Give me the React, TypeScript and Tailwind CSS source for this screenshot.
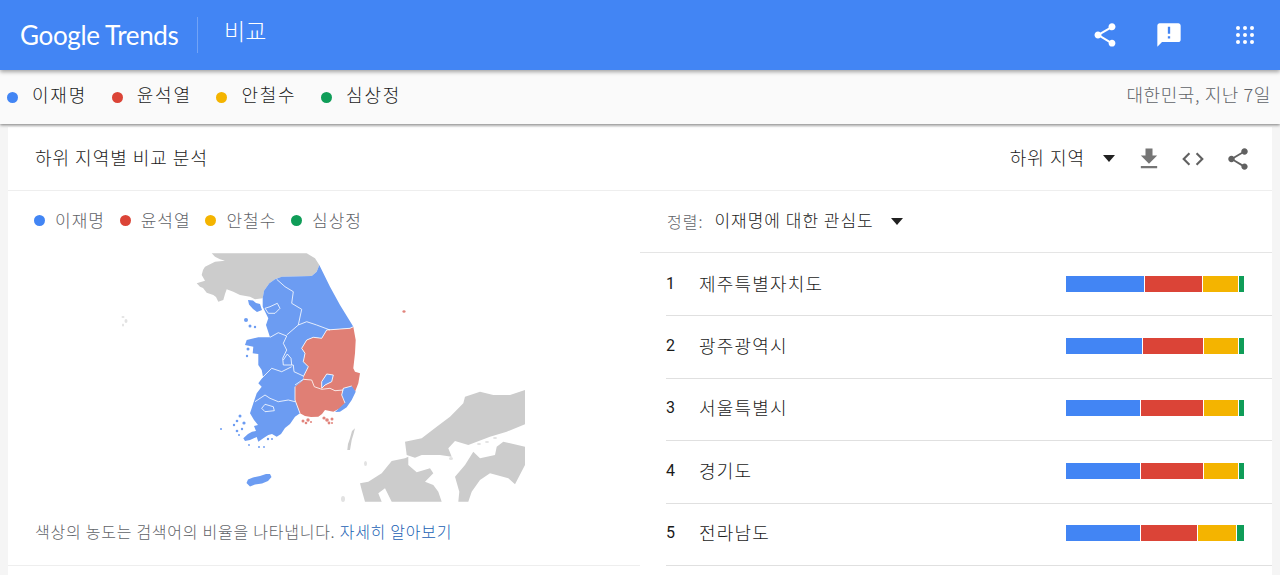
const TERMS = [
  { name: "이재명", dot: "bg-[#4285f4]" },
  { name: "윤석열", dot: "bg-[#db4437]" },
  { name: "안철수", dot: "bg-[#f4b400]" },
  { name: "심상정", dot: "bg-[#0f9d58]" },
];

const ROWS = [
  { rank: 1, name: "제주특별자치도", bars: [78, 58, 35, 5] },
  { rank: 2, name: "광주광역시", bars: [76, 61, 34, 5] },
  { rank: 3, name: "서울특별시", bars: [74, 63, 34, 5] },
  { rank: 4, name: "경기도", bars: [74, 63, 34, 5] },
  { rank: 5, name: "전라남도", bars: [74, 56, 38, 7] },
];

// tiny islands on the map: [x, y, radius]
const BLUE_ISLES = [
  [246, 320, 2], [250, 326, 1.5], [255, 327, 1.2], [248, 349, 1.5], [247, 356, 1.2], [221, 429, 1],
  [234, 425, 1.2], [237, 421, 1.3], [240, 416, 1.5], [244, 423, 1.6], [237, 431, 1.3], [239, 435, 1],
  [242, 429, 1.2], [259, 447, 1], [264, 447, 0.9], [249, 445, 0.9], [268, 439, 1.2], [272, 439, 1],
];
const RED_ISLES = [
  [303, 421, 1.5], [306, 423, 1.3], [308, 420, 1.7], [311, 422, 1], [324, 418, 1.6], [327, 420, 1.8],
  [329, 423, 1.4], [332, 419, 1.5], [332, 423, 1],
];

const SHARE =
  "M18 16.08c-.76 0-1.44.3-1.96.77L8.91 12.7c.05-.23.09-.46.09-.7s-.04-.47-.09-.7l7.05-4.11c.54.5 1.25.81 2.04.81 1.66 0 3-1.34 3-3s-1.34-3-3-3-3 1.34-3 3c0 .24.04.47.09.7L8.04 9.81C7.5 9.31 6.79 9 6 9c-1.66 0-3 1.34-3 3s1.34 3 3 3c.79 0 1.5-.31 2.04-.81l7.12 4.16c-.05.21-.08.43-.08.65 0 1.61 1.31 2.92 2.92 2.92 1.61 0 2.92-1.31 2.92-2.92s-1.31-2.92-2.92-2.92z";

const Icon = ({ d, className }: { d: string; className: string }) => (
  <svg viewBox="0 0 24 24" fill="currentColor" className={className}>
    <path d={d} />
  </svg>
);

const Caret = () => (
  <svg viewBox="0 0 12 7" className="h-[7px] w-3 fill-[#212121]">
    <path d="M0 0h12L6 7z" />
  </svg>
);

const KoreaMap = () => (
  <svg viewBox="115 250 415 255" className="h-[255px] w-[415px]">
    {/* north korea + japan */}
    <g fill="#cccccc">
      <path d="M211.7 253.3H306.7L315 258.3L319.3 265L316.7 271.7L311.7 276L281.7 276.7L275 279.3L269.3 283.3L264 290.7L262.7 298.3L255 299.3L250 296.7L240 295L233.3 291.7L226.7 289.3L225 294L223.3 300L218.3 301.7L216 297L213.3 295L206.7 292.7L203 288L200 286.7L196.7 283.3L205 280.7L201.7 275L203 270L205 266.7L215 261.7L225 260.7L220 259.3L215 256.7Z" />
      <path d="M525 390V424.3L506.7 431.7L490 436.7L468.3 445L455 441L448.3 448.3L451.7 456.7L440 455L421.7 455L415 457.7L406.7 455L405 441.7L421.7 438.3L436.7 426.7L450 416.7L463.3 403.3L465 396.7L480 391.7L493.3 395L510 395Z" />
      <path d="M503.3 441.7L525 446.7V465L515 484.3L508.3 478.3L490 473.3L480 480L471.7 491.7L468.3 501.7H458.3L459.3 491.7L455 476.7L465 465L473.3 451.7L480 458.3L495 455L496.7 446.7Z" />
      <path d="M408.3 456.7L408.3 465L416.7 472.3L430 468.3L433.3 473.3L425 481.7L433.3 485L438.3 491.7L441.7 501.7H391.7L385 488.3L378.3 493.3L381.7 501.7H365L361.7 490L360 483.3L368.3 481.7L381.7 473.3L391.7 461L405 458.3Z" />
      <path d="M355 428.3L353.5 434L351.7 440L350 450L347.3 450L348 444L350 438.3L352 431Z" />
      <g fill="#e2e2e2">
        <ellipse cx="365.5" cy="463.5" rx="1.5" ry="2.5" />
        <ellipse cx="343" cy="499" rx="2" ry="3" />
        <ellipse cx="451" cy="458.5" rx="2" ry="1.5" />
        <ellipse cx="479" cy="444" rx="2" ry="1" />
        <ellipse cx="487" cy="442" rx="2" ry="1" />
        <ellipse cx="495" cy="438" rx="2" ry="1" />
        <ellipse cx="123" cy="317" rx="1.5" ry="1" />
        <ellipse cx="126" cy="321" rx="1.5" ry="2" />
        <ellipse cx="123" cy="325" rx="1" ry="1.5" />
      </g>
    </g>

    {/* red provinces */}
    <path
      d="M353.3 326.7L355.7 340L355 353.3L353.3 368.3L355 371.7L360 373.3L358.3 383.3L355 391.7L351.7 386.7L343.3 388.3L341.7 395L346.7 401.7L340 408.3L333.3 411.7L325 410L322 414L318.3 416.7L311 417L305 416L300 413.3L295 400L295 386.7L303.3 380L303.3 376.7L308.3 366.7L303.3 361.7L305 353.3L301.7 348.3L306.7 340L313.3 337.3L321.7 338.3L326.7 330L350 328.3Z"
      fill="#e07f75"
    />
    <g fill="#d9655b" fillOpacity="0.8">
      {RED_ISLES.map(([cx, cy, r], i) => (
        <circle key={i} cx={cx} cy={cy} r={r} />
      ))}
      <ellipse cx="404" cy="311.5" rx="1.6" ry="1.2" />
    </g>

    {/* blue provinces */}
    <g fill="#6c9cf2">
      <path d="M319.3 265L330 286.7L340 305L352.3 325L353.3 326.7L350 328.3L326.7 330L321.7 338.3L313.3 337.3L306.7 340L301.7 348.3L305 353.3L303.3 361.7L308.3 366.7L303.3 376.7L303.3 380L295 386.7L295 400L300 413.3L295 416.7L290 424L285 428L281 434L276.7 436.7L272 434L268.3 435L263.3 438.3L258.3 441.7L256.7 437L250 440L245 441L243.3 438.3L248 434L252 431.7L256 431L254 426L258 425L254 420L250 413.3L253.3 403.3L256.7 393.3L261.7 386.7L258.3 383.3L263 377L261.7 370L258.3 365L258.3 354L252.7 353.3L253.3 346.7L245 345L246.7 340L258.3 337.3L270 337.3L266 325L268.3 318.3L262.7 306.7L262.7 298.3L264 290.7L269.3 283.3L275 279.3L281.7 276.7L311.7 276L316.7 271.7Z" />
      <path d="M343.3 388.3L351.7 386L355.7 391.7L351.7 400L346.7 407.3L340 411.7L335 412L345 403L341.7 395Z" />
      <path d="M246.5 483L248 479.5L253 477.5L260 476L266 474L270 474L271.5 477L268 481L262 483.5L255 484.5L250 486.5Z" />
      <path d="M248 300l5 .5 3 2.500 4 1 2 6-5 2-4-3-4-4.500z" />
      {BLUE_ISLES.map(([cx, cy, r], i) => (
        <circle key={i} cx={cx} cy={cy} r={r} />
      ))}
    </g>
    <path
      d="M321.7 381.7L326.7 374L333.3 375L331.7 381.7L325 385L321.7 388.3Z"
      fill="#6c9cf2"
      stroke="#fff"
      strokeWidth="0.9"
    />

    {/* region borders */}
    <g fill="none" stroke="#ffffff" strokeWidth="0.9" strokeOpacity="0.9">
      <path d="M276.7 279.3L285 286.7L293.3 291.7L291.7 303.3L301.7 309.3L298.3 325L286.7 335" />
      <path d="M298.3 325L306.7 321.7L316.7 325L330 330" />
      <path d="M270 337.3L278.3 332.7L286.7 336" />
      <path d="M286.7 336L283.3 343.3L286.7 350L282.7 358.3L283.3 365L293.3 365L294 371.7L303.3 376" />
      <path d="M283.3 360L287.3 354L291 358.3L291.7 365" />
      <path d="M261.7 378.3L271.7 368.3L281.7 371.7L291.7 366.7" />
      <path d="M255 401.7L265 395L270 398.3L278.3 401.7L288.3 400L295 401.7" />
      <path d="M261.7 408.3L265 404.3L273.3 406.7L274.3 410.7L265 411.7Z" />
      <path d="M295 385L303.3 379.3L311.7 380L314.3 386.7L321.7 389.3L330 388.3L335 390.7L343.3 390" />
      <path d="M270 306.7L277.3 303.3L280 308.3L275 313.3L268.3 313.3L265 308.3Z" />
      <path d="M345 403L341.7 395L343.3 388.3L351.7 386" />
      <path d="M353.3 326.7L350 328.3L326.7 330L321.7 338.3L313.3 337.3L306.7 340L301.7 348.3L305 353.3L303.3 361.7L308.3 366.7L303.3 376.7" />
      <path d="M295 386.7L295 400L300 413.3" />
    </g>
  </svg>
);

const StackedBar = ({ bars }: { bars: number[] }) => {
  const colors = ["bg-[#4285f4]", "bg-[#db4437]", "bg-[#f4b400]", "bg-[#0f9d58]"];
  return (
    <div className="flex h-4 w-[178px] gap-px">
      {bars.map((w, i) => (
        <div key={i} className={colors[i]} style={{ width: w }} />
      ))}
    </div>
  );
};

export default function App() {
  return (
    <div
      className="h-[575px] w-[1280px] overflow-hidden bg-[#f5f5f5] text-[#1a1a1a]"
      style={{ fontFamily: "'Noto Sans CJK KR', Roboto, sans-serif" }}
    >
      <header className="relative z-20 flex h-[70px] items-center bg-[#4285f4] pl-5 pr-[26px] text-white shadow-[0_2px_4px_rgba(0,0,0,0.35)]">
        <div className="w-[177px] font-['Lato'] text-[26px] leading-none tracking-[-0.35px]">
          Google Trends
        </div>
        <div className="h-9 w-px bg-white/25" />
        <div className="mb-[10px] ml-[26px] text-[23px] font-light leading-none">비교</div>
        <div className="ml-auto flex items-center">
          <Icon d={SHARE} className="h-7 w-7" />
          <Icon
            d="M20 2H4c-1.1 0-1.99.9-1.99 2L2 22l4-4h14c1.1 0 2-.9 2-2V4c0-1.1-.9-2-2-2zm-7 9h-2V5h2v6zm0 4h-2v-2h2v2z"
            className="ml-[36px] h-7 w-7"
          />
          <div className="ml-[53px] grid grid-cols-3 gap-[2.5px]">
            {Array.from({ length: 9 }).map((_, i) => (
              <span key={i} className="h-[4.5px] w-[4.5px] rounded-full bg-white" />
            ))}
          </div>
        </div>
      </header>

      <div className="relative z-10 flex h-[54px] items-center bg-[#fafafa] pb-[6px] pl-[7px] pr-[9px] shadow-[0_1px_3px_rgba(0,0,0,0.5)]">
        {TERMS.map((t) => (
          <div key={t.name} className="flex w-[104.7px] items-center gap-[14px]">
            <span className={`mt-[6px] h-[11px] w-[11px] rounded-full ${t.dot}`} />
            <span className="text-[18px] font-light leading-none tracking-[1.8px]">{t.name}</span>
          </div>
        ))}
        <div className="ml-auto text-[18px] font-light leading-none tracking-[0.6px] text-[#5f6368]">
          대한민국, 지난 7일
        </div>
      </div>

      <main className="mx-2 mt-[3px] h-[448px] bg-white">
        <div className="flex h-[64px] items-center border-b border-[#eeeeee] pl-[27px] pr-[21px]">
          <div className="mb-[4px] text-[18px] font-light leading-none tracking-[1px]">하위 지역별 비교 분석</div>
          <div className="mb-[4px] ml-auto text-[18px] font-light leading-none tracking-[1px]">하위 지역</div>
          <div className="ml-[18px]">
            <Caret />
          </div>
          <Icon
            d="M19 9h-4V3H9v6H5l7 7 7-7zM5 18v2h14v-2H5z"
            className="ml-[20px] h-7 w-7 text-[#757575]"
          />
          <Icon
            d="M9.4 16.6L4.8 12l4.6-4.6L8 6l-6 6 6 6 1.4-1.4zm5.2 0l4.6-4.6-4.6-4.6L16 6l6 6-6 6-1.4-1.4z"
            className="ml-[17px] h-[26px] w-[26px] text-[#616161]"
          />
          <Icon d={SHARE} className="ml-[19px] h-[26px] w-[26px] text-[#616161]" />
        </div>

        <div className="flex">
          <section className="h-[375px] w-[632px] border-b border-[#eeeeee]">
            <div className="flex h-[59px] items-center pl-[26px]">
              {TERMS.map((t) => (
                <div key={t.name} className="flex w-[85.7px] items-center gap-[10px]">
                  <span className={`h-[11px] w-[11px] rounded-full ${t.dot}`} />
                  <span className="mb-[2px] text-[17px] font-light leading-none tracking-[1px] text-[#5f6368]">
                    {t.name}
                  </span>
                </div>
              ))}
            </div>
            <div className="pl-[107px]">
              <KoreaMap />
            </div>
            <div className="mt-[18px] pl-[27px] text-[16px] font-light leading-none tracking-[0.75px] text-[#5f6368]">
              색상의 농도는 검색어의 비율을 나타냅니다.{" "}
              <span className="text-[#1a5fb4]">자세히 알아보기</span>
            </div>
          </section>

          <section className="w-[632px]">
            <div className="flex h-[62px] items-center border-b border-[#e5e5e5] pb-[4px] pl-[27px]">
              <span className="mt-[3px] text-[16px] font-light leading-none tracking-[1px] text-[#5f6368]">
                정렬:
              </span>
              <span className="ml-[11px] text-[17px] font-light leading-none tracking-[1px]">
                이재명에 대한 관심도
              </span>
              <span className="ml-[17px] mt-[3px]">
                <Caret />
              </span>
            </div>
            <div className="pt-px">
              {ROWS.map((r) => (
                <div
                  key={r.rank}
                  className="ml-[26px] flex h-[62.4px] items-center border-b border-[#e0e0e0] pb-[2px] pr-7"
                >
                  <span className="w-[33px] font-['Roboto'] text-[16px] leading-none">{r.rank}</span>
                  <span className="mb-[2px] text-[18px] font-light leading-none tracking-[1.2px]">{r.name}</span>
                  <div className="ml-auto">
                    <StackedBar bars={r.bars} />
                  </div>
                </div>
              ))}
            </div>
          </section>
        </div>
      </main>
    </div>
  );
}
